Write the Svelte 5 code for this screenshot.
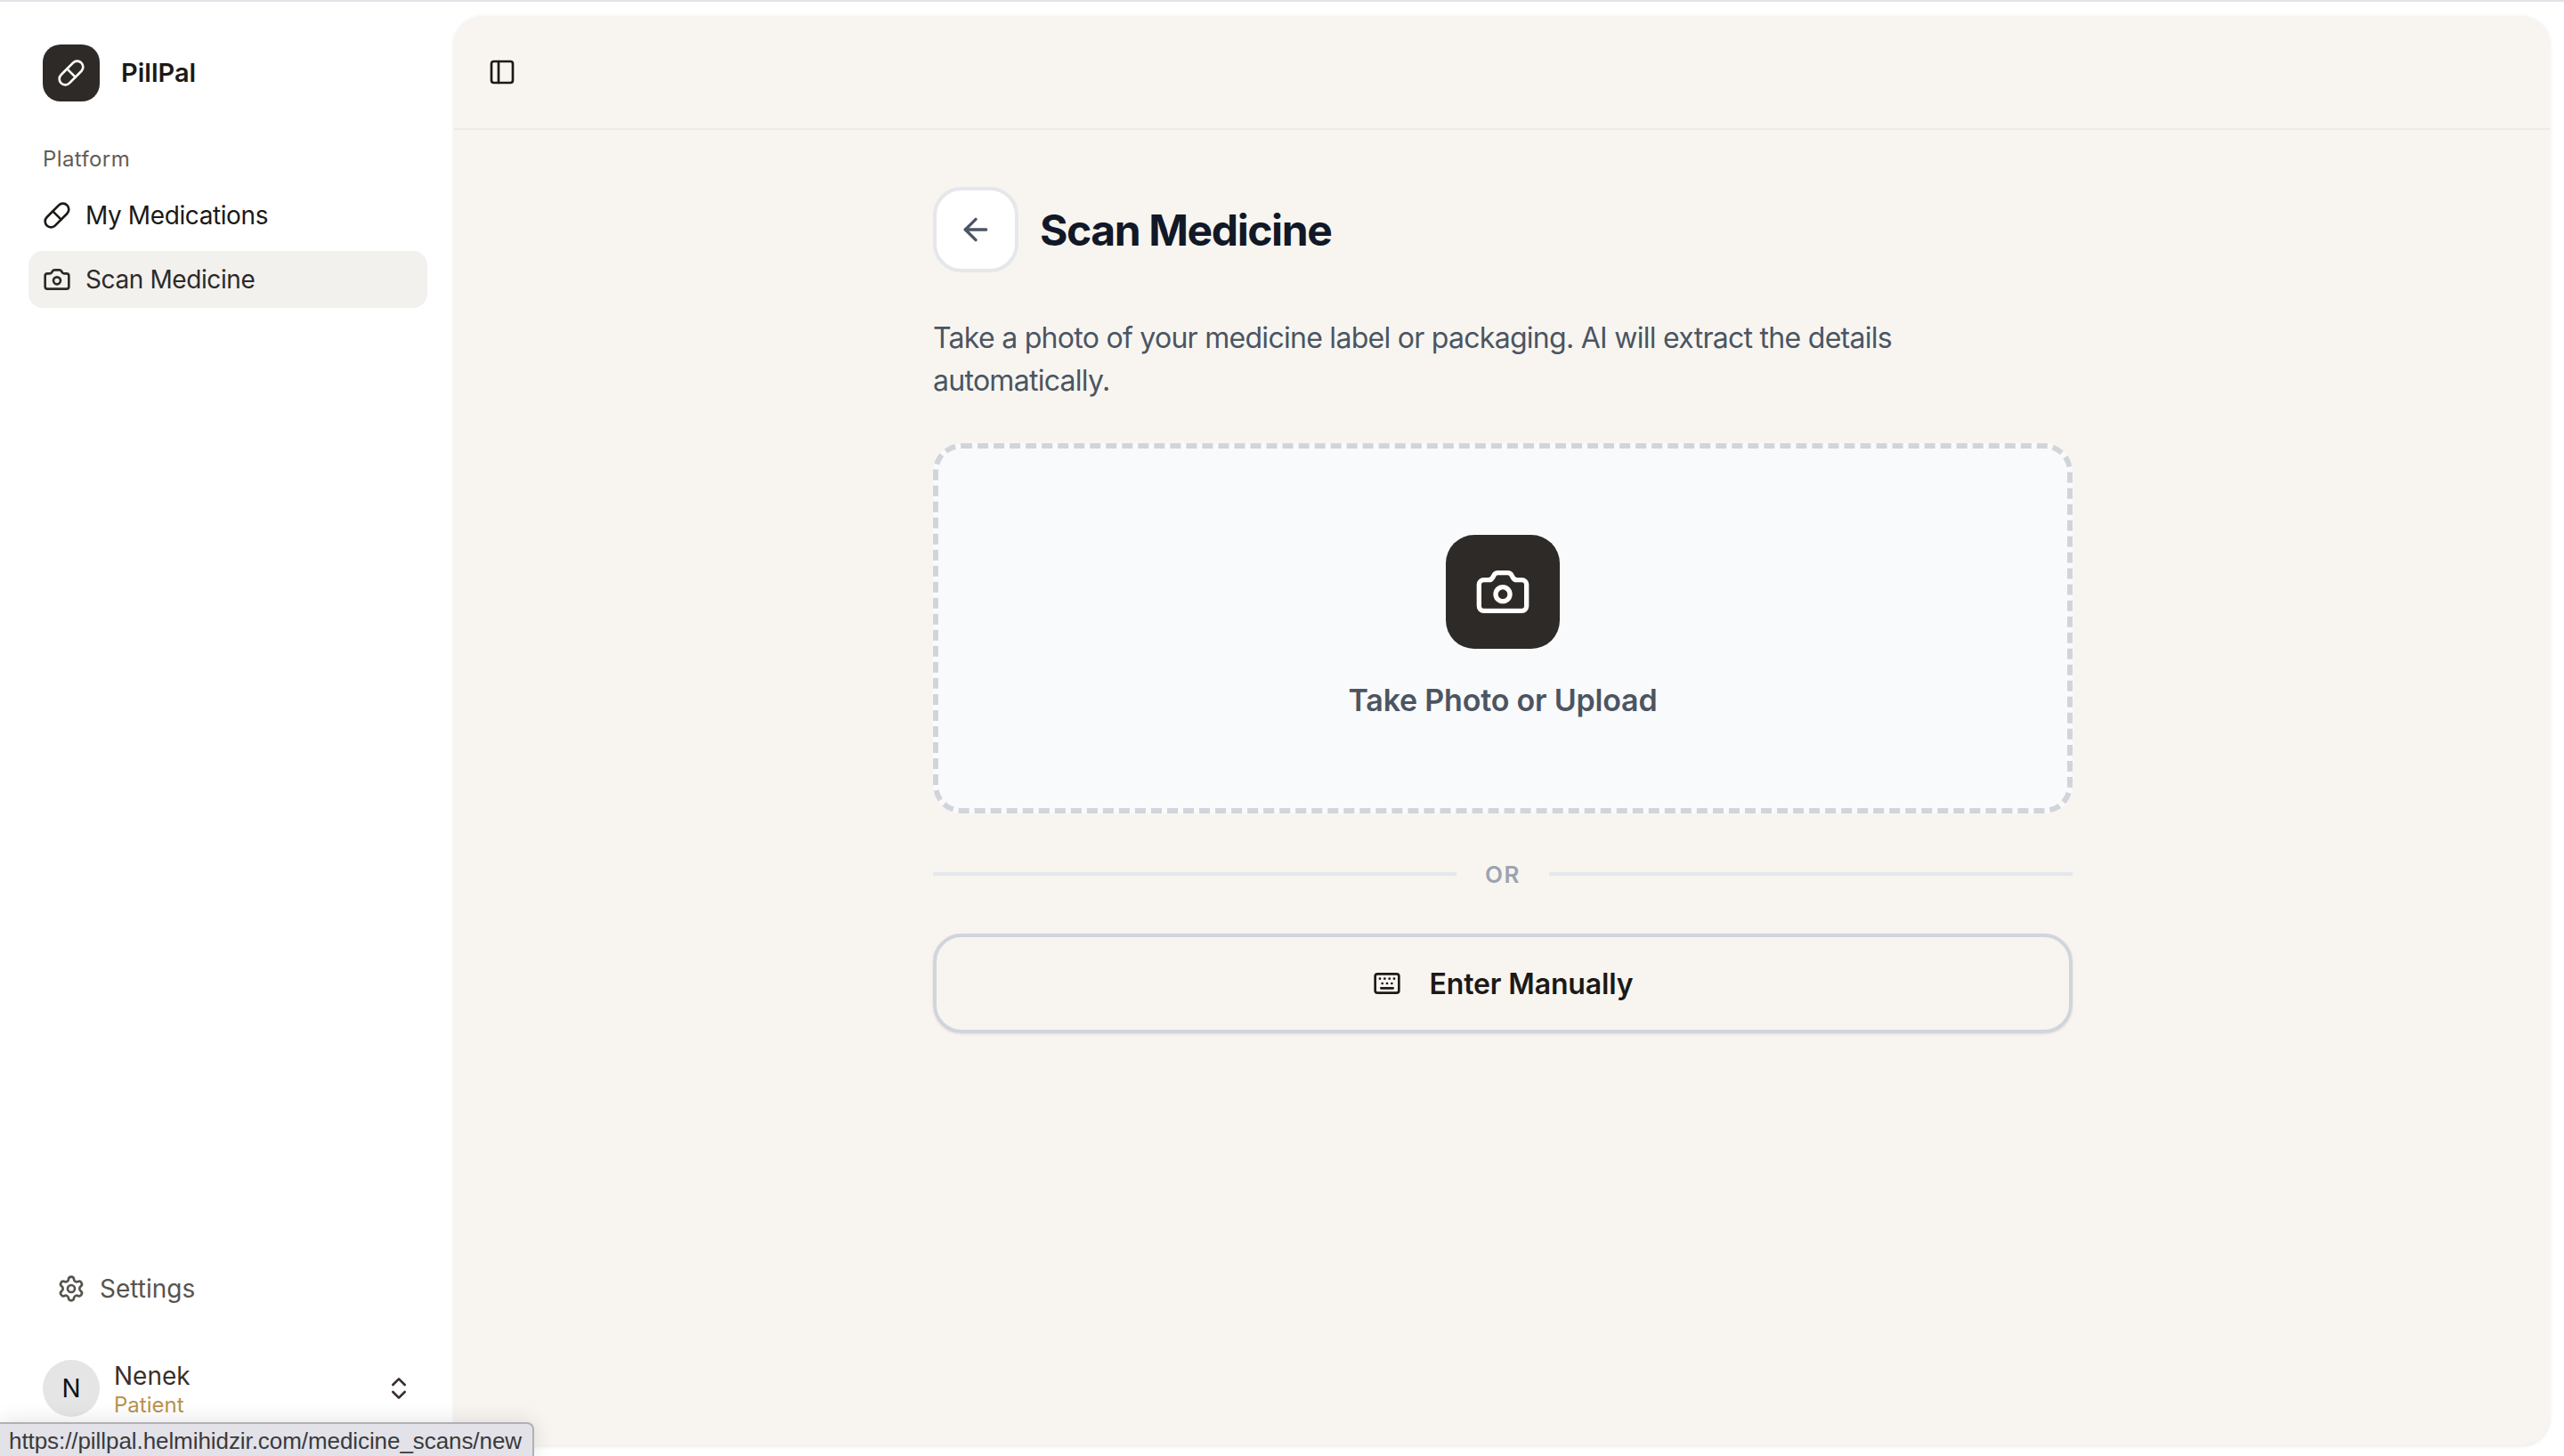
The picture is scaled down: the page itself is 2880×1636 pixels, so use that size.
<script>
	const url = 'https://pillpal.helmihidzir.com/medicine_scans/new';
</script>

<div class="app">
	<aside class="sidebar">
		<div class="brand">
			<div class="logo">
				<svg class="icon" viewBox="0 0 24 24"><path d="m10.5 20.5 10-10a4.95 4.95 0 1 0-7-7l-10 10a4.95 4.95 0 1 0 7 7Z" /><path d="m8.5 8.5 7 7" /></svg>
			</div>
			<span class="brand-name">PillPal</span>
		</div>

		<div class="group-label">Platform</div>
		<nav class="nav">
			<div class="nav-item">
				<svg class="icon" viewBox="0 0 24 24"><path d="m10.5 20.5 10-10a4.95 4.95 0 1 0-7-7l-10 10a4.95 4.95 0 1 0 7 7Z" /><path d="m8.5 8.5 7 7" /></svg>
				<span>My Medications</span>
			</div>
			<div class="nav-item active">
				<svg class="icon" viewBox="0 0 24 24"><path d="M13.997 4a2 2 0 0 1 1.76 1.05l.486.9A2 2 0 0 0 18.003 7H20a2 2 0 0 1 2 2v9a2 2 0 0 1-2 2H4a2 2 0 0 1-2-2V9a2 2 0 0 1 2-2h1.997a2 2 0 0 0 1.759-1.048l.489-.904A2 2 0 0 1 10.004 4z" /><circle cx="12" cy="13" r="3" /></svg>
				<span>Scan Medicine</span>
			</div>
		</nav>

		<div class="sidebar-foot">
			<div class="settings">
				<svg class="icon" viewBox="0 0 24 24"><path d="M9.671 4.136a2.34 2.34 0 0 1 4.659 0 2.34 2.34 0 0 0 3.319 1.915 2.34 2.34 0 0 1 2.33 4.033 2.34 2.34 0 0 0 0 3.831 2.34 2.34 0 0 1-2.33 4.033 2.34 2.34 0 0 0-3.319 1.915 2.34 2.34 0 0 1-4.659 0 2.34 2.34 0 0 0-3.32-1.915 2.34 2.34 0 0 1-2.33-4.033 2.34 2.34 0 0 0 0-3.831A2.34 2.34 0 0 1 6.35 6.051a2.34 2.34 0 0 0 3.319-1.915" /><circle cx="12" cy="12" r="3" /></svg>
				<span>Settings</span>
			</div>
			<div class="user">
				<div class="avatar">N</div>
				<div class="user-text">
					<div class="user-name">Nenek</div>
					<div class="user-role">Patient</div>
				</div>
				<svg class="icon chevrons" viewBox="0 0 24 24"><path d="m7 15 5 5 5-5" /><path d="m7 9 5-5 5 5" /></svg>
			</div>
		</div>
	</aside>

	<main class="panel">
		<header class="topbar">
			<svg class="icon" viewBox="0 0 24 24"><rect x="3" y="3" width="18" height="18" rx="2" /><path d="M9 3v18" /></svg>
		</header>

		<div class="content">
			<div class="title-row">
				<button class="back" aria-label="Back">
					<svg class="icon arrow" viewBox="0 0 24 24"><path d="m12 19-7-7 7-7" /><path d="M19 12H5" /></svg>
				</button>
				<h1>Scan Medicine</h1>
			</div>

			<p class="intro">Take a photo of your medicine label or packaging. AI will extract the details automatically.</p>

			<div class="dropzone">
				<div class="tile">
					<svg class="icon tile-icon" viewBox="0 0 24 24"><path d="M13.997 4a2 2 0 0 1 1.76 1.05l.486.9A2 2 0 0 0 18.003 7H20a2 2 0 0 1 2 2v9a2 2 0 0 1-2 2H4a2 2 0 0 1-2-2V9a2 2 0 0 1 2-2h1.997a2 2 0 0 0 1.759-1.048l.489-.904A2 2 0 0 1 10.004 4z" /><circle cx="12" cy="13" r="3" /></svg>
				</div>
				<div class="drop-label">Take Photo or Upload</div>
			</div>

			<div class="divider">
				<span class="rule"></span>
				<span class="or">OR</span>
				<span class="rule"></span>
			</div>

			<button class="manual">
				<svg class="icon" viewBox="0 0 24 24"><path d="M10 8h.01" /><path d="M12 12h.01" /><path d="M14 8h.01" /><path d="M16 12h.01" /><path d="M18 8h.01" /><path d="M6 8h.01" /><path d="M7 16h10" /><path d="M8 12h.01" /><rect x="2" y="4" width="20" height="16" rx="2" /></svg>
				<span>Enter Manually</span>
			</button>
		</div>
	</main>

	<div class="status">{url}</div>
</div>

<style>
	:global(body) {
		margin: 0;
		background: #fff;
	}

	.app {
		position: relative;
		display: flex;
		box-sizing: border-box;
		height: 1636px;
		overflow: hidden;
		border-top: 2px solid #e2e2e8;
		font-family: Inter, 'Liberation Sans', sans-serif;
		color: #1c1917;
	}

	.icon {
		flex: none;
		width: 32px;
		height: 32px;
		fill: none;
		stroke: currentColor;
		stroke-width: 2;
		stroke-linecap: round;
		stroke-linejoin: round;
	}

	.sidebar {
		flex: none;
		display: flex;
		flex-direction: column;
		box-sizing: border-box;
		width: 510px;
		padding: 48px 30px 44px 32px;
	}

	.brand {
		display: flex;
		align-items: center;
		gap: 24px;
		padding-left: 16px;
	}

	.logo {
		display: flex;
		align-items: center;
		justify-content: center;
		width: 64px;
		height: 64px;
		border-radius: 20px;
		background: #2e2a27;
		color: #fff;
	}

	.brand-name {
		padding-bottom: 2px;
		font-size: 29px;
		font-weight: 600;
	}

	.group-label {
		margin-top: 49px;
		padding-left: 16px;
		font-size: 24px;
		line-height: 32px;
		letter-spacing: 0.4px;
		color: #625d58;
	}

	.nav {
		display: flex;
		flex-direction: column;
		gap: 8px;
		margin-top: 15px;
	}

	.nav-item {
		display: flex;
		align-items: center;
		gap: 16px;
		height: 64px;
		padding-left: 16px;
		border-radius: 16px;
		font-size: 28px;
		letter-spacing: -0.4px;
	}

	.nav-item.active {
		background: #f3f1ee;
		color: #2e2a27;
	}

	.sidebar-foot {
		display: flex;
		flex-direction: column;
		gap: 48px;
		margin-top: auto;
	}

	.settings {
		display: flex;
		align-items: center;
		gap: 16px;
		height: 64px;
		padding-left: 32px;
		font-size: 28px;
		color: #57534e;
	}

	.user {
		display: flex;
		align-items: center;
		padding-left: 16px;
		height: 64px;
	}

	.avatar {
		display: flex;
		align-items: center;
		justify-content: center;
		width: 64px;
		height: 64px;
		border-radius: 50%;
		background: #e5e5e5;
		font-size: 28px;
		color: #111;
	}

	.user-text {
		flex: 1;
		margin: 4px 0 0 16px;
	}

	.user-name {
		font-size: 28px;
		line-height: 34px;
		color: #3a302a;
	}

	.user-role {
		font-size: 24px;
		line-height: 32px;
		color: #b8924f;
	}

	.chevrons {
		margin-right: 16px;
		color: #3a302a;
	}

	.panel {
		flex: 1;
		min-width: 0;
		margin: 16px 16px 12px 0;
		border-radius: 32px;
		background: #f8f5f0;
		box-shadow: 0 1px 4px rgba(0, 0, 0, 0.1);
	}

	.topbar {
		display: flex;
		align-items: center;
		box-sizing: border-box;
		height: 128px;
		padding-left: 38px;
		border-bottom: 2px solid #eeebe6;
	}

	.content {
		width: 1280px;
		margin: 64px 0 0 538px;
	}

	.title-row {
		display: flex;
		align-items: center;
		gap: 24px;
	}

	.back {
		display: flex;
		align-items: center;
		justify-content: center;
		box-sizing: border-box;
		width: 96px;
		height: 96px;
		padding: 0;
		border: 4px solid #e5e7eb;
		border-radius: 32px;
		background: #fff;
		color: #4b5563;
	}

	.arrow {
		width: 40px;
		height: 40px;
	}

	h1 {
		margin: 0;
		font-size: 48px;
		font-weight: 700;
		letter-spacing: -1.4px;
		color: #111827;
	}

	.intro {
		margin: 50px 0 46px;
		font-size: 32px;
		line-height: 48px;
		letter-spacing: -0.72px;
		color: #4b5563;
	}

	.dropzone {
		display: flex;
		flex-direction: column;
		align-items: center;
		box-sizing: border-box;
		height: 416px;
		padding-top: 97px;
		border: 6px dashed #d1d5db;
		border-radius: 32px;
		background: #f9fafb;
	}

	.tile {
		display: flex;
		align-items: center;
		justify-content: center;
		width: 128px;
		height: 128px;
		border-radius: 32px;
		background: #2e2a27;
		color: #fff;
	}

	.tile-icon {
		width: 64px;
		height: 64px;
	}

	.drop-label {
		margin-top: 34px;
		font-size: 34px;
		line-height: 48px;
		font-weight: 600;
		letter-spacing: -0.2px;
		color: #4b5563;
	}

	.divider {
		display: flex;
		align-items: center;
		height: 40px;
		margin-top: 48px;
	}

	.rule {
		flex: 1;
		height: 4px;
		background: #e5e7eb;
	}

	.or {
		width: 104px;
		text-align: center;
		font-size: 26px;
		font-weight: 600;
		letter-spacing: 1.5px;
		color: #9ca3af;
	}

	.manual {
		display: flex;
		align-items: center;
		justify-content: center;
		gap: 32px;
		box-sizing: border-box;
		width: 100%;
		height: 112px;
		margin-top: 47px;
		border: 4px solid #d1d5db;
		border-radius: 32px;
		background: transparent;
		box-shadow: 0 1px 3px rgba(0, 0, 0, 0.1);
		font-family: inherit;
		font-size: 32px;
		font-weight: 600;
		letter-spacing: -0.15px;
		color: #1c1917;
	}

	.status {
		position: absolute;
		left: 0;
		bottom: 0;
		box-sizing: border-box;
		height: 38px;
		padding: 0 12px 0 10px;
		border: 2px solid #b0b0b6;
		border-width: 2px 2px 0 0;
		border-top-right-radius: 8px;
		background: #e2e2e8;
		box-shadow: 0 0 24px rgba(0, 0, 0, 0.12);
		font-family: 'Liberation Sans', sans-serif;
		font-size: 26px;
		line-height: 38px;
		letter-spacing: -0.07px;
		color: #3a3a3e;
	}
</style>
